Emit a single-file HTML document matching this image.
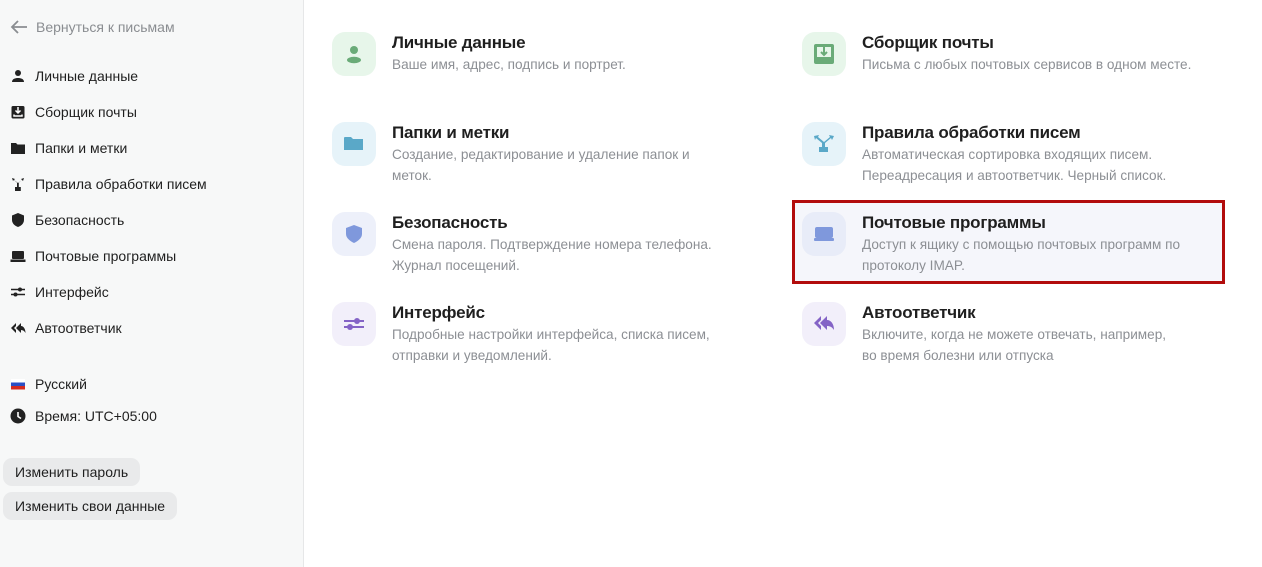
<!DOCTYPE html>
<html><head><meta charset="utf-8"><style>
*{box-sizing:border-box;margin:0;padding:0}
body{width:1262px;height:567px;background:#fff;font-family:"Liberation Sans",sans-serif;position:relative;overflow:hidden}
.side{position:absolute;left:0;top:0;width:304px;height:567px;background:#f7f8f8;border-right:1px solid #e6e7e8}
.back{position:absolute;left:10px;top:19px;font-size:14px;color:#8a8d91;display:flex;align-items:center;gap:8px}
.nav{position:absolute;left:10px;font-size:14px;color:#1f1f1f;display:flex;align-items:center;gap:9px;height:20px}
.nav svg{width:16px;height:16px}
.btn{position:absolute;left:3px;height:28px;background:#e9eaeb;border-radius:9px;font-size:14px;color:#1f1f1f;padding:0 12px;line-height:28px}
.card{position:absolute;width:420px}
.ic{position:absolute;left:0;top:0;width:44px;height:44px;border-radius:13px;display:flex;align-items:center;justify-content:center}
.t{position:absolute;left:60px;top:1px;font-size:17px;font-weight:bold;color:#1f1f1f;white-space:nowrap;letter-spacing:-0.2px}
.d{position:absolute;left:60px;top:22px;font-size:13.6px;line-height:21px;color:#8c8f94;white-space:nowrap}
.hl{position:absolute;left:792px;top:200px;width:433px;height:84px;border:3px solid #b20c0c;background:#f5f6fb}
</style></head><body>
<div class="side">
<div class="back"><svg width="18" height="14" viewBox="0 0 18 14"><path d="M8 1L2 7l6 6M2 7h15" stroke="#8a8d91" stroke-width="1.8" fill="none"/></svg>Вернуться к письмам</div>
<div class="nav" style="top:66px"><svg viewBox="0 0 16 16"><circle cx="8" cy="5" r="3" fill="#222"/><path d="M2 14c0-3 3-4 6-4s6 1 6 4z" fill="#222"/></svg>Личные данные</div>
<div class="nav" style="top:102px"><svg viewBox="0 0 16 16"><rect x="1.5" y="2" width="13" height="12.5" rx="1.5" fill="#222"/><path d="M8 3v6M5.5 6.5L8 9l2.5-2.5M4 10.5v1.5h8v-1.5" stroke="#fff" stroke-width="1.5" fill="none"/></svg>Сборщик почты</div>
<div class="nav" style="top:138px"><svg viewBox="0 0 16 16"><path d="M1 3h5l1.5 1.5H15V14H1z" fill="#222"/></svg>Папки и метки</div>
<div class="nav" style="top:174px"><svg viewBox="0 0 16 16"><path d="M2 2l3 1-1 1 4 3 4-3-1-1 3-1-1 3-1-1-3.2 2.6V11h2v4H5v-4h2V6.6L3.8 4 3 5z" fill="#222"/></svg>Правила обработки писем</div>
<div class="nav" style="top:210px"><svg viewBox="0 0 16 16"><path d="M8 1l6 2.5V8c0 3.5-3 6-6 7-3-1-6-3.5-6-7V3.5z" fill="#222"/></svg>Безопасность</div>
<div class="nav" style="top:246px"><svg viewBox="0 0 16 16"><rect x="2" y="3" width="12" height="8" rx="1" fill="#222"/><rect x="0.5" y="11.5" width="15" height="2.5" fill="#222"/></svg>Почтовые программы</div>
<div class="nav" style="top:282px"><svg viewBox="0 0 16 16"><path d="M1 5.5h14M1 10.5h14" stroke="#222" stroke-width="1.5"/><circle cx="10" cy="5.5" r="2" fill="#222"/><circle cx="5.5" cy="10.5" r="2" fill="#222"/></svg>Интерфейс</div>
<div class="nav" style="top:318px"><svg viewBox="0 0 16 16"><path d="M6 3L1 8l5 5V10l-2-2 2-2zM11 3L6 8l5 5v-3c2 0 3.5 1 4.5 3 0-4-2-7-4.5-7z" fill="#222"/></svg>Автоответчик</div>
<div class="nav" style="top:374px"><svg viewBox="0 0 16 16"><rect x="1" y="3" width="14" height="3.5" fill="#fff"/><rect x="1" y="6.5" width="14" height="3.5" fill="#2a4fc4"/><rect x="1" y="10" width="14" height="3.5" fill="#d52b1e"/></svg>Русский</div>
<div class="nav" style="top:406px"><svg viewBox="0 0 16 16"><circle cx="8" cy="8" r="7.5" fill="#222"/><path d="M8 4v4.5l3 2" stroke="#fff" stroke-width="1.6" fill="none"/></svg>Время: UTC+05:00</div>
<div class="btn" style="top:458px">Изменить пароль</div>
<div class="btn" style="top:492px">Изменить свои данные</div>
</div>

<div class="hl"></div>

<div class="card" style="left:332px;top:32px"><div class="ic" style="background:#e7f6ea"><svg width="22" height="22" viewBox="0 0 22 22"><circle cx="11" cy="7" r="4" fill="#6aab78"/><ellipse cx="11" cy="17" rx="7" ry="3.2" fill="#6aab78"/></svg></div><div class="t">Личные данные</div><div class="d">Ваше имя, адрес, подпись и портрет.</div></div>
<div class="card" style="left:332px;top:122px"><div class="ic" style="background:#e6f3f9"><svg width="22" height="22" viewBox="0 0 22 22"><path d="M1 5a1 1 0 011-1h6l2 2h10v11H1z" fill="#5aa8c8"/></svg></div><div class="t">Папки и метки</div><div class="d">Создание, редактирование и удаление папок и<br>меток.</div></div>
<div class="card" style="left:332px;top:212px"><div class="ic" style="background:#edf0fa"><svg width="22" height="22" viewBox="0 0 22 22"><path d="M11 2l8 3v6c0 4-4 7-8 9-4-2-8-5-8-9V5z" fill="#7f98dc"/></svg></div><div class="t">Безопасность</div><div class="d">Смена пароля. Подтверждение номера телефона.<br>Журнал посещений.</div></div>
<div class="card" style="left:332px;top:302px"><div class="ic" style="background:#f2effa"><svg width="22" height="22" viewBox="0 0 22 22"><path d="M1 8h20M1 14h20" stroke="#8463c6" stroke-width="2"/><circle cx="14" cy="8" r="3" fill="#8463c6"/><circle cx="7" cy="14" r="3" fill="#8463c6"/></svg></div><div class="t">Интерфейс</div><div class="d">Подробные настройки интерфейса, списка писем,<br>отправки и уведомлений.</div></div>

<div class="card" style="left:802px;top:32px"><div class="ic" style="background:#e7f6ea"><svg width="24" height="24" viewBox="0 0 24 24"><rect x="2" y="2" width="20" height="20" rx="2" fill="#6aab78"/><rect x="5" y="5" width="14" height="10" fill="#e7f6ea"/><path d="M12 5v8M9 10l3 3 3-3" stroke="#6aab78" stroke-width="2" fill="none"/></svg></div><div class="t">Сборщик почты</div><div class="d">Письма с любых почтовых сервисов в одном месте.</div></div>
<div class="card" style="left:802px;top:122px"><div class="ic" style="background:#e6f3f9"><svg width="24" height="24" viewBox="0 0 24 24"><path d="M2 4l5-1-1 2 6 5 6-5-1-2 5 1-2 4-1-2-6 5v4h3v5H7v-5h3v-4L4 6 3 8z" fill="#5aa8c8"/></svg></div><div class="t">Правила обработки писем</div><div class="d">Автоматическая сортировка входящих писем.<br>Переадресация и автоответчик. Черный список.</div></div>
<div class="card" style="left:802px;top:212px"><div class="ic" style="background:#e8ecf8"><svg width="22" height="22" viewBox="0 0 22 22"><rect x="2" y="4" width="18" height="11" rx="2" fill="#7f98dc"/><rect x="1" y="15" width="20" height="3" rx="1" fill="#7f98dc"/></svg></div><div class="t">Почтовые программы</div><div class="d">Доступ к ящику с помощью почтовых программ по<br>протоколу IMAP.</div></div>
<div class="card" style="left:802px;top:302px"><div class="ic" style="background:#f2effa"><svg width="24" height="24" viewBox="0 0 24 24"><path d="M9 4L2 11l7 7v-4l-3-3 3-3zM15 4l-7 7 7 7v-4c3 0 5 1 7 4 0-6-3-10-7-10z" fill="#8463c6"/></svg></div><div class="t">Автоответчик</div><div class="d">Включите, когда не можете отвечать, например,<br>во время болезни или отпуска</div></div>
</body></html>
